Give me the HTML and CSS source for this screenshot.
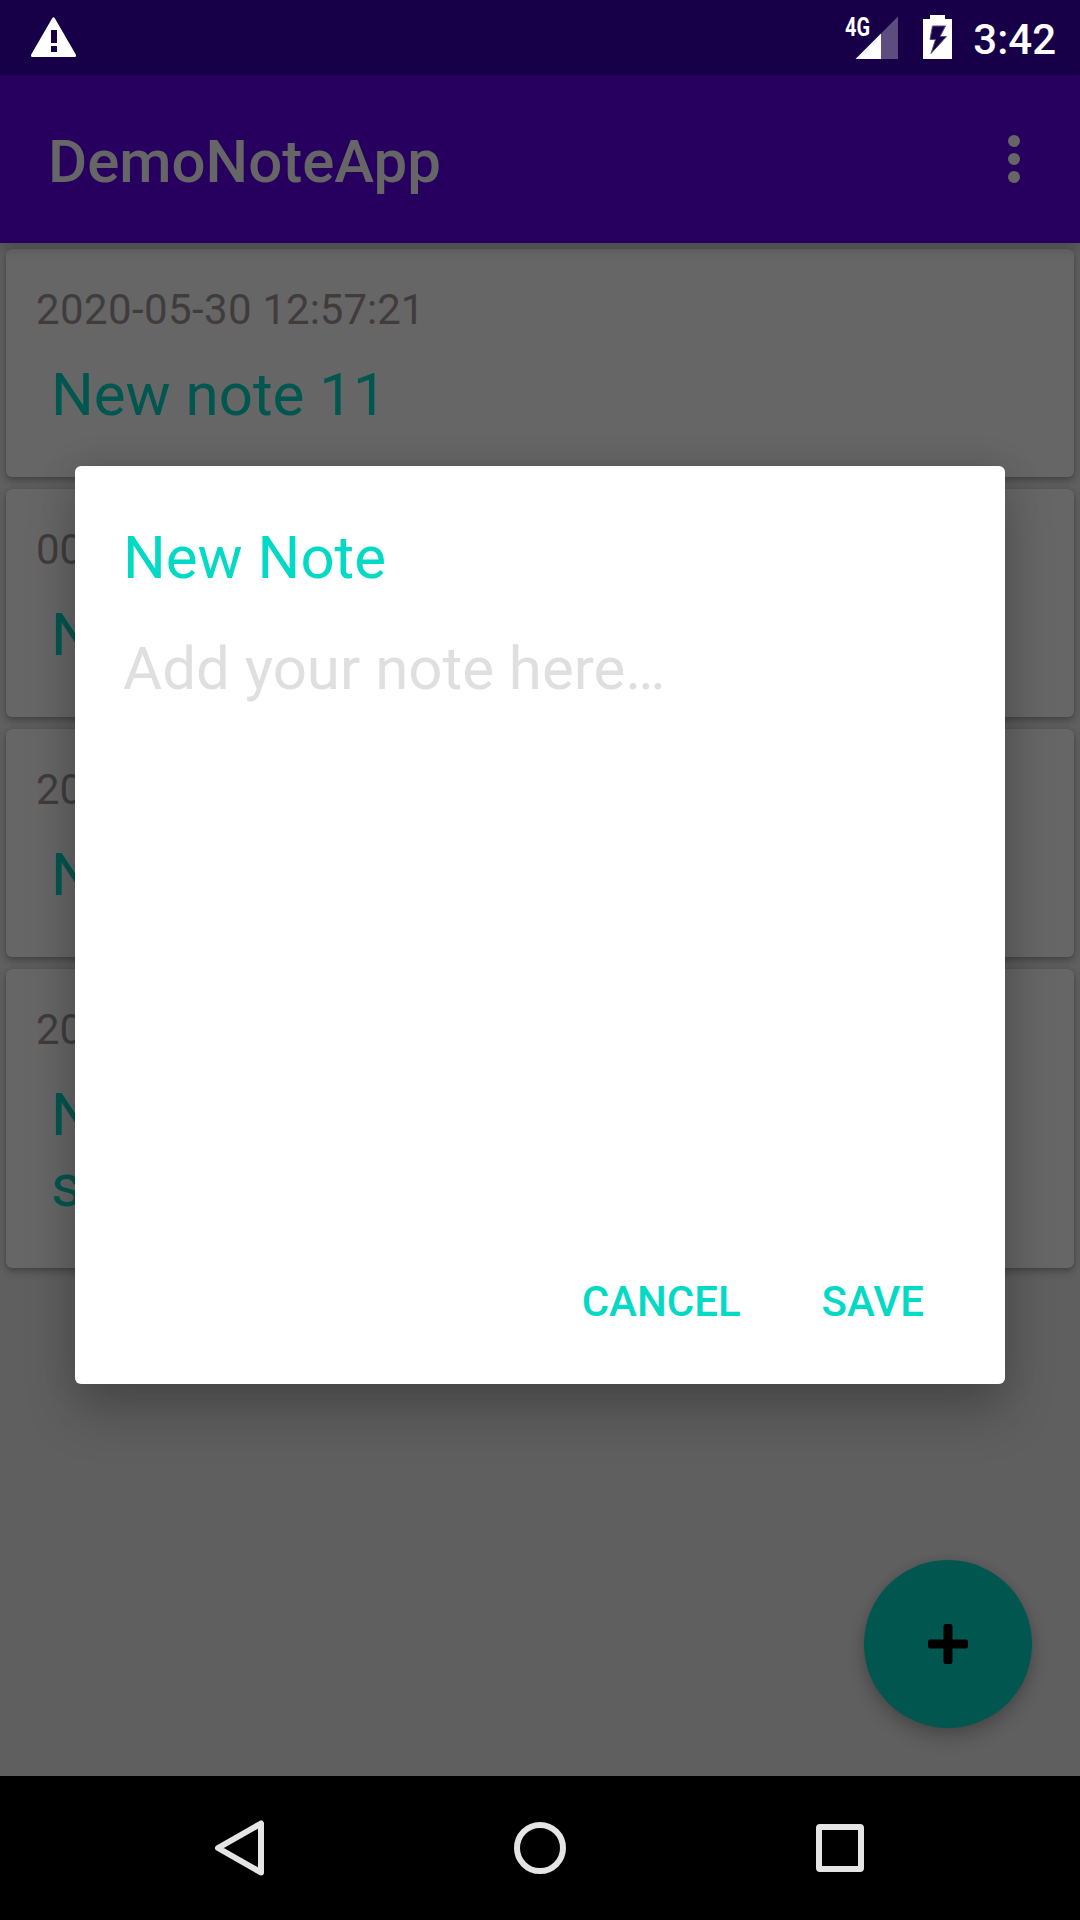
FILE: index.html
```html
<!DOCTYPE html>
<html lang="en">
<head>
<meta charset="utf-8">
<title>DemoNoteApp</title>
<link rel="stylesheet" href="styles.css">
</head>
<body>
<div class="screen">
  <div class="status-bar">
    <svg class="warning" width="46" height="41" viewBox="0 0 46 41">
      <path fill="#fff" fill-rule="evenodd" d="M21.2 1.3Q22.5-.6 23.8 1.3L44.8 37.5Q45.8 40 43.5 40H1.5Q-.8 40 .2 37.5ZM20 13V26H26V13ZM20 29V35H26V29Z"/>
    </svg>
    <div class="status-icons">
      <svg class="signal" width="54" height="48" viewBox="0 0 54 48">
        <path fill="#5d4c7f" d="M53 4.500V47H36V21.500Z"/>
        <path fill="#fff" d="M36 21.500V47H10.500Z"/>
        <text class="network" x="0" y="23.500" textLength="25" lengthAdjust="spacingAndGlyphs">4G</text>
      </svg>
      <svg class="battery" width="29" height="44" viewBox="0 0 29 44">
        <path fill="#fff" d="M7 0H22V4H29V44H0V4H7Z"/>
        <path fill="#170048" stroke="#5d4c7f" stroke-width="1" d="M9.500 11H22.500L17 21.500H23.500L8 38.500L12.500 24.500H7Z"/>
      </svg>
      <span class="clock">3:42</span>
    </div>
  </div>
  <header class="toolbar">
    <h1 class="app-name">DemoNoteApp</h1>
    <svg width="12" height="48" viewBox="0 0 12 48" fill="#666">
      <circle cx="6" cy="6" r="6"/><circle cx="6" cy="24" r="6"/><circle cx="6" cy="42" r="6"/>
    </svg>
  </header>
  <main class="notes">
    <article class="card"><p class="date"><span class="day">2020-05-30</span> 12:57:21</p><p class="note">New note 11</p></article>
    <article class="card"><p class="date">00</p><p class="note">N</p></article>
    <article class="card"><p class="date">20</p><p class="note">N</p></article>
    <article class="card"><p class="date">20</p><p class="note">N<br>s</p></article>
    <div class="fab">
      <svg width="40" height="40" viewBox="0 0 40 40">
        <rect x="15.500" y="0" width="9" height="40" rx="2"/><rect x="0" y="15.500" width="40" height="9" rx="2"/>
      </svg>
    </div>
  </main>
  <nav class="nav-bar">
    <svg width="72" height="72" viewBox="0 0 72 72"><path d="M57 11.500V60.500L14 36Z"/></svg>
    <svg width="72" height="72" viewBox="0 0 72 72"><circle cx="36" cy="36" r="23"/></svg>
    <svg width="72" height="72" viewBox="0 0 72 72"><rect x="15" y="15" width="42" height="42" rx="1"/></svg>
  </nav>
  <section class="dialog">
    <h2 class="dialog-title">New Note</h2>
    <p class="hint">Add your note here…</p>
    <div class="actions"><span>CANCEL</span><span>SAVE</span></div>
  </section>
</div>
</body>
</html>
```
FILE: styles.css
```css
* { box-sizing: border-box; margin: 0; padding: 0; }
body { font-family: Roboto, "Liberation Sans", sans-serif; }
svg { display: block; flex: none; }

.screen {
  position: relative;
  display: flex;
  flex-direction: column;
  width: 1080px;
  height: 1920px;
  overflow: hidden;
  background: #5f5f5f;
}

.status-bar {
  display: flex;
  justify-content: space-between;
  align-items: flex-start;
  height: 75px;
  padding: 0 24px 0 31px;
  background: #170048;
}
.warning { margin-top: 17px; }
.status-icons { display: flex; align-items: flex-start; }
.signal { margin: 12px 24px 0 0; }
.network { font-size: 25px; font-weight: 700; fill: #fff; }
.battery { margin: 15px 21px 0 0; }
.clock {
  margin-top: 15px;
  color: #fff;
  font-size: 42px;
  font-weight: 500;
  line-height: 49px;
}

.toolbar {
  position: relative;
  z-index: 1;
  display: flex;
  justify-content: space-between;
  align-items: center;
  height: 168px;
  padding: 0 60px 0 48px;
  background: #27005f;
  box-shadow: 0 6px 12px rgba(0, 0, 0, 0.2);
}
.app-name {
  padding-top: 5px;
  color: #666;
  font-size: 60px;
  font-weight: 500;
  line-height: 70px;
}

.notes {
  position: relative;
  display: flex;
  flex: 1;
  flex-direction: column;
  gap: 12px;
  padding: 6px;
}
.card {
  padding: 36px 30px 47px;
  border-radius: 6px;
  background: #666;
  box-shadow: 0 4px 7px rgba(0, 0, 0, 0.25), 0 0 3px rgba(0, 0, 0, 0.15);
}
.date { color: #413c3c; font-size: 42px; line-height: 49px; }
.day { letter-spacing: 0.4px; }
.note {
  margin-top: 25px;
  padding-left: 15px;
  color: #01574f;
  font-size: 60px;
  line-height: 71px;
}

.fab {
  position: absolute;
  right: 48px;
  bottom: 48px;
  display: grid;
  place-items: center;
  width: 168px;
  height: 168px;
  border-radius: 50%;
  background: #01574f;
  box-shadow: 0 10px 18px rgba(0, 0, 0, 0.2), 0 0 8px rgba(0, 0, 0, 0.1);
}

.nav-bar {
  display: flex;
  justify-content: center;
  align-items: center;
  gap: 228px;
  height: 144px;
  background: #000;
}
.nav-bar svg {
  fill: none;
  stroke: #e5e5e5;
  stroke-width: 6px;
  stroke-linejoin: round;
}

.dialog {
  position: absolute;
  top: 466px;
  left: 75px;
  display: flex;
  flex-direction: column;
  width: 930px;
  height: 918px;
  padding: 57px 81px 43px 48px;
  border-radius: 6px;
  background: #fff;
  box-shadow: 0 30px 50px rgba(0, 0, 0, 0.21), 0 0 36px rgba(0, 0, 0, 0.12);
}
.dialog-title {
  color: #03dac5;
  font-size: 60px;
  font-weight: 400;
  line-height: 70px;
}
.hint { margin-top: 41px; color: #dfdfdf; font-size: 60px; line-height: 70px; }
.actions {
  display: flex;
  justify-content: flex-end;
  gap: 81px;
  margin-top: auto;
  padding-bottom: 15px;
  color: #03dac5;
  font-size: 42px;
  font-weight: 500;
  line-height: 49px;
}
```
